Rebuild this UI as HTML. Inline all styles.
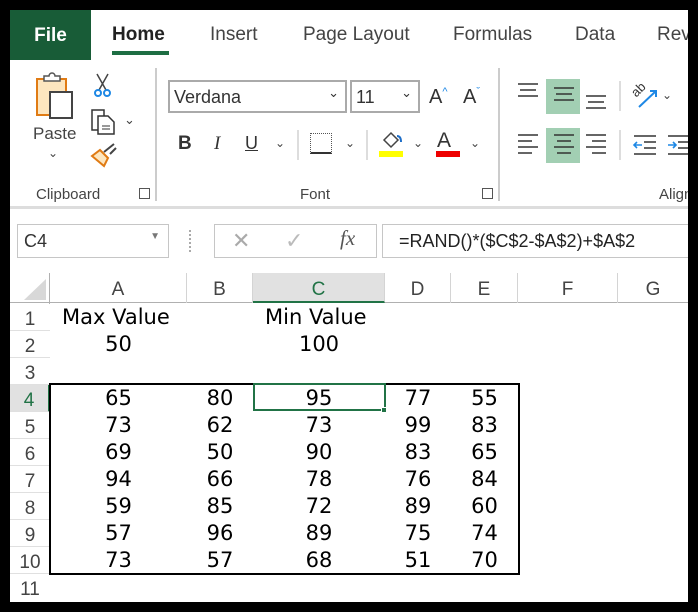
<!DOCTYPE html>
<html><head><meta charset="utf-8"><style>
*{margin:0;padding:0;box-sizing:border-box}
body{width:698px;height:612px;background:#000;position:relative;overflow:hidden;font-family:"Liberation Sans",sans-serif}
.a{position:absolute}
.tab{position:absolute;top:24px;font-size:19px;color:#444}
.lbl{position:absolute;top:186px;font-size:15px;color:#444}
.cell{position:absolute;font-family:"DejaVu Sans","Liberation Sans",sans-serif;font-size:21px;color:#000;text-align:center}
.rh{position:absolute;left:10px;width:40px;text-align:center;font-size:19px;color:#444;border-bottom:1px solid #e0e0e0;background:#fff}
.ch{position:absolute;top:273px;height:30px;font-size:19px;color:#444;text-align:center;line-height:34px;border-right:1px solid #d4d4d4}
</style></head><body>
<div class="a" style="left:10px;top:10px;width:678px;height:592px;background:#fff"></div>
<div class="a" style="left:10px;top:10px;width:81px;height:50px;background:#185c37;color:#fff;font-size:19px;font-weight:bold;line-height:52px;text-align:center">File</div>
<div class="tab" style="left:112px;color:#222;font-weight:bold">Home</div>
<div class="a" style="left:112px;top:51px;width:57px;height:4px;background:#1e6e43"></div>
<div class="tab" style="left:210px">Insert</div>
<div class="tab" style="left:303px">Page Layout</div>
<div class="tab" style="left:453px">Formulas</div>
<div class="tab" style="left:575px">Data</div>
<div class="tab" style="left:657px">Rev</div>
<div class="a" style="left:155px;top:68px;width:2px;height:133px;background:#ccc"></div>
<div class="a" style="left:498px;top:68px;width:2px;height:133px;background:#ccc"></div>
<div class="a" style="left:10px;top:206px;width:678px;height:3px;background:#ddd"></div>
<svg class="a" style="left:36px;top:72px" width="44" height="48"><rect x="1" y="7" width="29" height="36" fill="#fde6bf" stroke="#e07b14" stroke-width="2"/><rect x="14" y="20" width="22" height="26" fill="#fff" stroke="#444" stroke-width="2"/><path d="M8 9 V4 H13 A3 3 0 0 1 19 4 H24 V9 Z" fill="#fff" stroke="#555" stroke-width="1.5"/></svg>
<div class="a" style="left:33px;top:124px;font-size:17px;color:#444">Paste</div>
<div class="a" style="left:48px;top:146px;font-size:12px;color:#444">&#8964;</div>
<svg class="a" style="left:92px;top:72px" width="22" height="26"><path d="M5 2 L14 18 M16 2 L7 18" stroke="#444" stroke-width="1.5" fill="none"/><circle cx="6" cy="21" r="3" fill="none" stroke="#1e88e5" stroke-width="2"/><circle cx="15" cy="21" r="3" fill="none" stroke="#1e88e5" stroke-width="2"/></svg>
<svg class="a" style="left:90px;top:108px" width="28" height="28"><rect x="2" y="2" width="12" height="20" fill="#fff" stroke="#333" stroke-width="1.5"/><path d="M8 8 H18 L24 14 V26 H8 Z" fill="#fff" stroke="#333" stroke-width="1.5"/><path d="M12 18H20M12 21H20" stroke="#333"/></svg>
<div class="a" style="left:124px;top:112px;font-size:13px;color:#444">&#8964;</div>
<svg class="a" style="left:90px;top:142px" width="28" height="26"><path d="M2 14 L14 24 L18 16 L10 8 Z" fill="#fde6bf" stroke="#e07b14" stroke-width="2"/><path d="M14 10 L24 2 M20 12 L26 6" stroke="#444" stroke-width="2"/></svg>
<div class="lbl" style="left:36px">Clipboard</div>
<div class="a" style="left:139px;top:188px;width:11px;height:11px;border:1.5px solid #555"></div>
<div class="a" style="left:168px;top:80px;width:179px;height:33px;border:2px solid #aaa;font-size:18px;color:#333;padding:5px 4px">Verdana<span style="position:absolute;right:6px;top:3px;font-size:13px">&#8964;</span></div>
<div class="a" style="left:350px;top:80px;width:70px;height:33px;border:2px solid #aaa;font-size:18px;color:#333;padding:5px 4px">11<span style="position:absolute;right:6px;top:3px;font-size:13px">&#8964;</span></div>
<div class="a" style="left:429px;top:86px;font-size:20px;color:#333">A<span style="font-size:11px;color:#1e88e5;vertical-align:top">^</span></div>
<div class="a" style="left:463px;top:86px;font-size:20px;color:#333">A<span style="font-size:11px;color:#1e88e5;vertical-align:top">&#711;</span></div>
<div class="a" style="left:178px;top:133px;font-size:19px;font-weight:bold;color:#333">B</div>
<div class="a" style="left:214px;top:133px;font-size:19px;font-style:italic;color:#333;font-family:'Liberation Serif',serif">I</div>
<div class="a" style="left:245px;top:133px;font-size:18px;text-decoration:underline;color:#333">U</div>
<div class="a" style="left:275px;top:136px;font-size:12px;color:#444">&#8964;</div>
<div class="a" style="left:297px;top:130px;width:2px;height:30px;background:#ddd"></div>
<div class="a" style="left:310px;top:133px;width:22px;height:21px;border:1px dotted #555;border-bottom:2px solid #333"></div>
<div class="a" style="left:345px;top:136px;font-size:12px;color:#444">&#8964;</div>
<div class="a" style="left:366px;top:130px;width:2px;height:30px;background:#ddd"></div>
<svg class="a" style="left:378px;top:130px" width="26" height="28"><path d="M6 10 L13 3 L20 10 L13 17 Z" fill="none" stroke="#444" stroke-width="1.5"/><path d="M19 6 Q23 6 23 12" stroke="#1e6ec8" stroke-width="2" fill="none"/><rect x="1" y="21" width="24" height="6" fill="#ff0"/></svg>
<div class="a" style="left:413px;top:136px;font-size:12px;color:#444">&#8964;</div>
<div class="a" style="left:437px;top:129px;font-size:21px;color:#333">A</div>
<div class="a" style="left:436px;top:151px;width:24px;height:6px;background:#e00"></div>
<div class="a" style="left:470px;top:136px;font-size:12px;color:#444">&#8964;</div>
<div class="lbl" style="left:300px">Font</div>
<div class="a" style="left:482px;top:188px;width:11px;height:11px;border:1.5px solid #555"></div>
<div class="a" style="left:546px;top:79px;width:34px;height:35px;background:#a2cfb3"></div>
<div class="a" style="left:546px;top:128px;width:34px;height:35px;background:#a2cfb3"></div>
<svg class="a" style="left:514px;top:80px" width="100" height="85" stroke="#333" stroke-width="1.6">
<path d="M4 4H24M6 10H22M4 16H24"/><path d="M40 8H60M42 14H58M40 20H60"/><path d="M72 16H92M74 22H90M72 28H92"/>
<path d="M4 55H24M4 61H18M4 67H24M4 73H18"/><path d="M40 55H60M43 61H57M40 67H60M43 73H57"/><path d="M72 55H92M78 61H92M72 67H92M78 73H92"/></svg>
<div class="a" style="left:619px;top:81px;width:2px;height:30px;background:#ddd"></div>
<div class="a" style="left:619px;top:130px;width:2px;height:30px;background:#ddd"></div>
<div class="a" style="left:631px;top:82px;font-size:13px;color:#333;transform:rotate(-45deg)">ab</div>
<svg class="a" style="left:636px;top:85px" width="26" height="26"><path d="M3 22 L20 6 M14 6H20V12" stroke="#1e88e5" stroke-width="2" fill="none"/></svg>
<div class="a" style="left:662px;top:88px;font-size:12px;color:#444">&#8964;</div>
<svg class="a" style="left:630px;top:132px" width="58" height="26" stroke-width="1.6"><path d="M4 4H26M14 10H26M14 16H26M4 22H26" stroke="#333"/><path d="M12 13H4M7 10L4 13L7 16" stroke="#1e88e5" fill="none"/><path d="M38 4H58M48 10H58M48 16H58M38 22H58" stroke="#333"/><path d="M38 13H46M43 10L46 13L43 16" stroke="#1e88e5" fill="none"/></svg>
<div class="lbl" style="left:659px">Align</div>
<div class="a" style="left:10px;top:209px;width:678px;height:65px;background:#fff"></div>
<div class="a" style="left:17px;top:224px;width:152px;height:34px;border:1px solid #c6c6c6;font-size:18px;color:#333;padding:6px 6px">C4<span style="position:absolute;right:8px;top:6px;font-size:10px;color:#777">&#9660;</span></div>
<div class="a" style="left:189px;top:230px;width:2px;height:22px;border-left:2px dotted #aaa"></div>
<div class="a" style="left:214px;top:224px;width:163px;height:34px;border:1px solid #c6c6c6"></div>
<div class="a" style="left:232px;top:228px;font-size:22px;color:#aaa">&#10005;</div>
<div class="a" style="left:285px;top:228px;font-size:22px;color:#bbb">&#10003;</div>
<div class="a" style="left:340px;top:226px;font-size:21px;font-style:italic;color:#555;font-family:'Liberation Serif',serif">fx</div>
<div class="a" style="left:382px;top:224px;width:320px;height:34px;border:1px solid #c6c6c6;font-size:18px;color:#222;padding:6px 16px">=RAND()*($C$2-$A$2)+$A$2</div>
<div class="a" style="left:688px;top:0;width:10px;height:612px;background:#000"></div>
<div class="a" style="left:10px;top:273px;width:678px;height:30px;background:#fff;border-bottom:1px solid #b0b0b0"></div>
<svg class="a" style="left:10px;top:273px" width="40" height="30"><path d="M36 6 V27 H14 Z" fill="#d8d8d8"/></svg>
<div class="a" style="left:49px;top:273px;width:1px;height:329px;background:#b0b0b0"></div>
<div class="ch" style="left:50px;width:137px">A</div>
<div class="ch" style="left:187px;width:66px">B</div>
<div class="ch" style="left:253px;width:132px;background:#e1e1e1;border-bottom:2px solid #217346;color:#217346">C</div>
<div class="ch" style="left:385px;width:66px">D</div>
<div class="ch" style="left:451px;width:67px">E</div>
<div class="ch" style="left:518px;width:100px">F</div>
<div class="ch" style="left:618px;width:70px;border:none">G</div>
<div class="rh" style="top:304px;height:27px;line-height:32px">1</div>
<div class="rh" style="top:331px;height:27px;line-height:32px">2</div>
<div class="rh" style="top:358px;height:27px;line-height:32px">3</div>
<div class="rh" style="top:385px;height:27px;line-height:32px;background:#e1e1e1;color:#217346;border-right:2px solid #217346">4</div>
<div class="rh" style="top:412px;height:27px;line-height:32px">5</div>
<div class="rh" style="top:439px;height:27px;line-height:32px">6</div>
<div class="rh" style="top:466px;height:27px;line-height:32px">7</div>
<div class="rh" style="top:493px;height:27px;line-height:32px">8</div>
<div class="rh" style="top:520px;height:27px;line-height:32px">9</div>
<div class="rh" style="top:547px;height:27px;line-height:32px">10</div>
<div class="rh" style="top:574px;height:28px;line-height:32px;border:none">11</div>
<div class="cell" style="left:62px;top:305px;text-align:left">Max Value</div>
<div class="cell" style="left:265px;top:305px;text-align:left">Min Value</div>
<div class="cell" style="left:50px;width:137px;top:332px">50</div>
<div class="cell" style="left:253px;width:132px;top:332px">100</div>
<div class="a" style="left:49px;top:383px;width:471px;height:192px;border:2px solid #000"></div>
<div class="a" style="left:253px;top:383px;width:133px;height:28px;border:2px solid #217346"></div>
<div class="a" style="left:381px;top:407px;width:6px;height:6px;background:#217346;border:1px solid #fff"></div>
<div id="d"></div>
<script>
var rows=[[65,80,95,77,55],[73,62,73,99,83],[69,50,90,83,65],[94,66,78,76,84],[59,85,72,89,60],[57,96,89,75,74],[73,57,68,51,70]];
var cols=[[50,137],[187,66],[253,132],[385,66],[451,67]];var h='';
rows.forEach(function(r,i){r.forEach(function(v,j){h+='<div class="cell" style="left:'+cols[j][0]+'px;width:'+cols[j][1]+'px;top:'+(386+27*i)+'px">'+v+'</div>';});});
document.getElementById('d').innerHTML=h;
</script>
</body></html>
